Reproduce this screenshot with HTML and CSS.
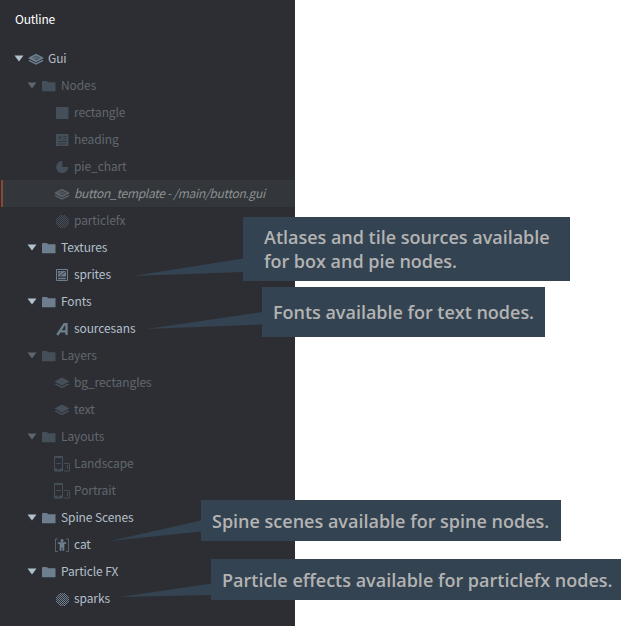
FILE: index.html
```
<!DOCTYPE html>
<html lang="en">
<head>
<meta charset="utf-8">
<title>Outline</title>
<link rel="stylesheet" href="styles.css">
</head>
<body>
<svg class="defs" width="0" height="0" aria-hidden="true">
  <defs>
    <symbol id="arrow" viewBox="0 0 10 7"><path d="M0.5 0.5h9L5 6.5z" fill="currentColor"/></symbol>
    <symbol id="folder" viewBox="0 0 16 16"><path d="M1 4q0-1 1-1h3.500q.7 0 1 .6L7 4.300h7.500v9H1z" fill="currentColor"/></symbol>
    <symbol id="gui" viewBox="0 0 16 16">
      <path d="M8 2.800 15.300 6.500v1L8 11.300.7 7.500v-1z" fill="currentColor"/>
      <path d="M.9 9.300 8 12.900l7.100-3.600" fill="none" stroke="currentColor" stroke-width="1.300"/>
      <path d="M4.500 6.800 8 5l4.200 2.100M6.500 7.800l2-1 2 1-2 1z" fill="none" stroke="#2d2e33" stroke-width=".6"/>
    </symbol>
    <symbol id="layer" viewBox="0 0 16 16">
      <path d="M8 2.500 15.500 6.500 8 10.500.5 6.500z" fill="currentColor"/>
      <path d="M.5 9.300 2.200 8.400 8 11.400l5.800-3 1.700.9L8 13.300z" fill="currentColor"/>
    </symbol>
    <symbol id="box" viewBox="0 0 16 16"><path d="M2 2h12.500v12H2z" fill="currentColor"/></symbol>
    <symbol id="heading" viewBox="0 0 16 16">
      <path d="M2 2h12.500v12H2z" fill="currentColor"/>
      <path d="M9 4.500h3.500M9 7h3.500M4 9.500h8.500M4 12h8.500M4 7 6.500 4v3.500" fill="none" stroke="#2d2e33" stroke-width=".7"/>
    </symbol>
    <symbol id="pie" viewBox="0 0 16 16"><path d="M8.300 2v6h6A6.100 6.100 0 1 1 8.300 2z" fill="currentColor"/></symbol>
    <symbol id="particles" viewBox="0 0 16 16">
      <path d="M6 2.500h5M4 4.500h9M2 6.500h13M2 8.500h13M2 10.500h13M4 12.500h9M6 14.500h5M5 3.500h7M3 5.500h11M3 7.500h11M3 9.500h11M3 11.500h11M5 13.500h7" fill="none" stroke="currentColor" stroke-width="1" stroke-dasharray="1 1"/>
    </symbol>
    <symbol id="atlas" viewBox="0 0 16 16">
      <path d="M2.500 2.500h11v11h-11z" fill="none" stroke="currentColor"/>
      <path d="M4 4h8v5.500H4zM4 10.700h8v1.500H4z" fill="currentColor"/>
      <path d="M4.200 7.500 7 4.500M6 9.200l5.500-4.700" stroke="#2d2e33" stroke-width=".9"/>
    </symbol>
    <symbol id="font" viewBox="0 0 16 16">
      <path d="M3.300 14 10.300 3.200h2.200V14M6.300 10.300h6" fill="none" stroke="currentColor" stroke-width="2.300"/>
    </symbol>
    <symbol id="layout" viewBox="0 0 16 16">
      <path d="M.5 .5v14.500h8V.5zM2.300 7.500h4.500M10 7.500h5.500v7.500H10M13.500 9v4" fill="none" stroke="currentColor"/>
      <path d="M.5 .5h8v1.500h-8zM.5 12.500H3.500v1.200h2v-1.200h3v2.500h-8z" fill="currentColor"/>
    </symbol>
    <symbol id="spine" viewBox="0 0 16 16">
      <path d="M4 2H1.500v12.500H4M12 2h2.500v12.500H12" fill="none" stroke="currentColor" opacity=".65"/>
      <circle cx="8" cy="3.500" r="1.600" fill="currentColor"/>
      <path d="M3.800 5.200h8.400v1.500L10.300 7v6.800H8.500V10.500h-1v3.300H5.700V7L3.800 6.700z" fill="currentColor"/>
    </symbol>
  </defs>
</svg>

<main class="outline">
  <h1 class="title">Outline</h1>
  <div class="row"><svg class="arrow"><use href="#arrow"/></svg><svg class="icon"><use href="#gui"/></svg><span>Gui</span></div>
  <div class="row l1 dim"><svg class="arrow"><use href="#arrow"/></svg><svg class="icon"><use href="#folder"/></svg><span>Nodes</span></div>
  <div class="row l2 dim"><svg class="icon"><use href="#box"/></svg><span>rectangle</span></div>
  <div class="row l2 dim"><svg class="icon"><use href="#heading"/></svg><span>heading</span></div>
  <div class="row l2 dim"><svg class="icon"><use href="#pie"/></svg><span>pie_chart</span></div>
  <div class="row l2 dim selected"><svg class="icon"><use href="#gui"/></svg><span>button_template - /main/button.gui</span></div>
  <div class="row l2 dim"><svg class="icon"><use href="#particles"/></svg><span>particlefx</span></div>
  <div class="row l1"><svg class="arrow"><use href="#arrow"/></svg><svg class="icon"><use href="#folder"/></svg><span>Textures</span></div>
  <div class="row l2"><svg class="icon"><use href="#atlas"/></svg><span>sprites</span></div>
  <div class="row l1"><svg class="arrow"><use href="#arrow"/></svg><svg class="icon"><use href="#folder"/></svg><span>Fonts</span></div>
  <div class="row l2"><svg class="icon"><use href="#font"/></svg><span>sourcesans</span></div>
  <div class="row l1 dim"><svg class="arrow"><use href="#arrow"/></svg><svg class="icon"><use href="#folder"/></svg><span>Layers</span></div>
  <div class="row l2 dim"><svg class="icon"><use href="#layer"/></svg><span>bg_rectangles</span></div>
  <div class="row l2 dim"><svg class="icon"><use href="#layer"/></svg><span>text</span></div>
  <div class="row l1 dim"><svg class="arrow"><use href="#arrow"/></svg><svg class="icon"><use href="#folder"/></svg><span>Layouts</span></div>
  <div class="row l2 dim"><svg class="icon"><use href="#layout"/></svg><span>Landscape</span></div>
  <div class="row l2 dim"><svg class="icon"><use href="#layout"/></svg><span>Portrait</span></div>
  <div class="row l1"><svg class="arrow"><use href="#arrow"/></svg><svg class="icon"><use href="#folder"/></svg><span>Spine Scenes</span></div>
  <div class="row l2"><svg class="icon"><use href="#spine"/></svg><span>cat</span></div>
  <div class="row l1"><svg class="arrow"><use href="#arrow"/></svg><svg class="icon"><use href="#folder"/></svg><span>Particle FX</span></div>
  <div class="row l2"><svg class="icon"><use href="#particles"/></svg><span>sparks</span></div>
</main>

<svg class="pointers" viewBox="0 0 621 626" aria-hidden="true">
  <path d="M133 276 243 258.500v13.500zM146 329 262 312v12.500zM110 541 201 520.500v11zM119 597 212 583.500v11.500z"/>
</svg>
<div class="callout textures">Atlases and tile sources available<br>for box and pie nodes.</div>
<div class="callout fonts">Fonts available for text nodes.</div>
<div class="callout spines">Spine scenes available for spine nodes.</div>
<div class="callout effects">Particle effects available for particlefx nodes.</div>
</body>
</html>
```
FILE: styles.css
```
* { box-sizing: border-box; }
body {
  margin: 0;
  width: 621px;
  height: 626px;
  position: relative;
  overflow: hidden;
  background: #fff;
}
.defs { position: absolute; }
.outline {
  width: 295px;
  height: 626px;
  background: #2d2e33;
  color: #b3bfca;
  font: 12px/27px "Noto Sans CJK SC", "Noto Sans", sans-serif;
  letter-spacing: -0.1px;
}
.title {
  margin: 0;
  height: 45px;
  padding: 5px 0 0 15px;
  color: #fff;
  font: inherit;
  letter-spacing: -0.2px;
}
.row {
  display: flex;
  align-items: center;
  height: 27px;
  padding-left: 14px;
  white-space: nowrap;
}
.row span { margin-bottom: 2px; }
.l1 { padding-left: 27px; }
.l2 { padding-left: 54px; }
.arrow { width: 10px; height: 7px; margin-right: 4px; color: #b1c0cd; }
.icon { width: 16px; height: 16px; margin-right: 4px; color: #6d7f8f; }
.dim { color: #60676f; }
.dim .arrow { color: #5f666d; }
.dim .icon { color: #454f59; }
.selected {
  background: #33363a;
  border-left: 2px solid #8b4635;
  margin-left: 1px;
  padding-left: 51px;
  color: #8e9194;
  font-style: italic;
  letter-spacing: -0.3px;
}
.selected .icon { color: #596169; }
.pointers {
  position: absolute;
  inset: 0;
  width: 621px;
  height: 626px;
  fill: #344351;
}
.callout {
  position: absolute;
  display: flex;
  align-items: center;
  background: #344351;
  color: #b3b3b3;
  font: 600 18px/24px "Open Sans", "Noto Sans", sans-serif;
  white-space: nowrap;
}
.textures { left: 243px; top: 217px; width: 327px; height: 64px; padding: 8px 0 0 21px; display: block; letter-spacing: -0.02px; }
.fonts { left: 262px; top: 287px; width: 283px; height: 50px; padding-left: 11px; letter-spacing: -0.02px; }
.spines { left: 201px; top: 500px; width: 360px; height: 41px; padding-left: 11px; }
.effects { left: 211px; top: 559px; width: 410px; height: 41px; padding-left: 11px; }
```
